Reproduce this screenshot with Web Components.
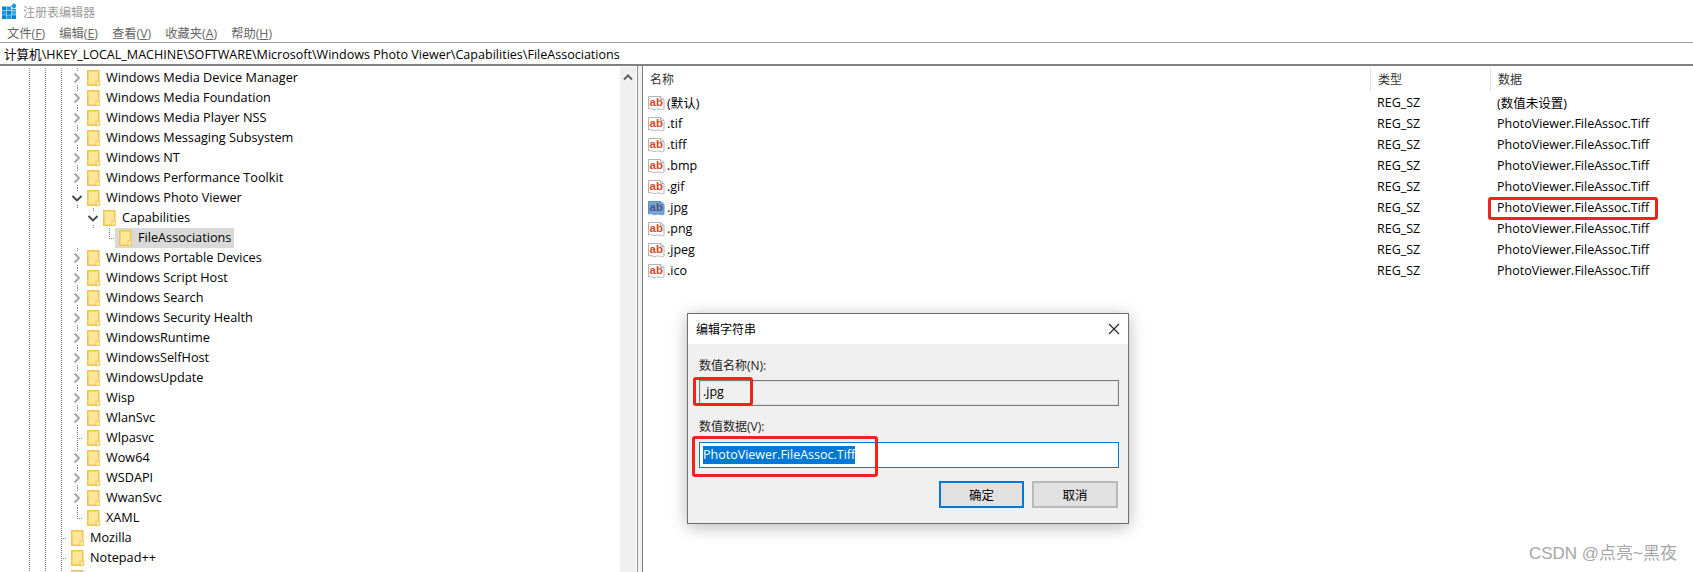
<!DOCTYPE html>
<html lang="zh-CN">
<head>
<meta charset="utf-8">
<title>注册表编辑器</title>
<style>
	html, body { margin: 0; height: 100%; background: #fff; overflow: hidden; }
	body { font: 13px "Open Sans", "Noto Sans CJK SC", sans-serif; color: #000; }
</style>
</head>
<body>
<reg-app></reg-app>
<script>
const FONT = `"Open Sans", "Noto Sans CJK SC", sans-serif`;

class RegTitlebar extends HTMLElement {
	connectedCallback() {
		const s = this.attachShadow({ mode: "open" });
		s.innerHTML = `
			<style>
				:host{display:flex;align-items:center;height:24px;padding-left:2px;gap:7px;font:12px ${FONT};color:#9b9b9b}
				svg{display:block;width:14px;height:16px;margin-bottom:2px}
				span{margin-bottom:1px}
			</style>
			<svg viewBox="0 0 14 16">
				<g fill="#0c7fc9">
					<rect x="0" y="3.500" width="4.400" height="4"/><rect x="4.800" y="3.500" width="4.400" height="4" fill="#1f97dc"/><rect x="9.600" y="6" width="4.400" height="1.500" fill="#1f97dc"/>
					<rect x="0" y="8" width="4.400" height="3.800" fill="#1f97dc"/><rect x="4.800" y="8" width="4.400" height="3.800"/><rect x="9.600" y="8" width="4.400" height="3.800" fill="#38aee6"/>
					<rect x="0" y="12.200" width="4.400" height="3.800"/><rect x="4.800" y="12.200" width="4.400" height="3.800" fill="#1f97dc"/><rect x="9.600" y="12.200" width="4.400" height="3.800"/>
				</g>
				<path d="M12 0l3 3-3 3-3-3z" fill="#1f97dc"/>
			</svg>
			<span>注册表编辑器</span>`;
	}
}
customElements.define("reg-titlebar", RegTitlebar);

class RegMenubar extends HTMLElement {
	connectedCallback() {
		const s = this.attachShadow({ mode: "open" });
		const items = [["文件", "F"], ["编辑", "E"], ["查看", "V"], ["收藏夹", "A"], ["帮助", "H"]];
		s.innerHTML = `
			<style>
				:host{display:flex;align-items:center;height:18px;padding-left:7px;gap:14px;font:12.300px ${FONT};color:#666}
			</style>
			${items.map(([t, k]) => `<span>${t}(<u>${k}</u>)</span>`).join("")}`;
	}
}
customElements.define("reg-menubar", RegMenubar);

class RegAddress extends HTMLElement {
	connectedCallback() {
		const s = this.attachShadow({ mode: "open" });
		s.innerHTML = `
			<style>
				:host{display:flex;align-items:center;height:21px;padding-left:4px;border-top:1px solid #a0a0a0;border-bottom:2px solid #808080;font:12.550px ${FONT};color:#000;white-space:nowrap}
			</style>
			<slot></slot>`;
	}
}
customElements.define("reg-address", RegAddress);

class TreeRow extends HTMLElement {
	connectedCallback() {
		const depth = +this.getAttribute("depth");
		const kind = this.getAttribute("kind") || "c";
		const folderX = 39 + 16 * depth;
		const own = folderX - 10;
		const dots = "repeating-linear-gradient(#7c7c7c 0 1px,transparent 1px 2px)";
		const bg = [];
		// the columns right of x=61 are not drawn under an expanded branch
		for (let x = 29; x < own && x <= 61; x += 16) bg.push(`${dots} ${x}px 0/1px 100% no-repeat`);
		if (kind === "c" || kind === "e") {
			bg.push(`${dots} ${own}px 0/1px 3px no-repeat`);
			bg.push(`${dots} ${own}px 100%/1px 3px no-repeat`);
		} else {
			bg.push(`${dots} ${own}px 0/1px ${kind === "l" ? "10px" : "100%"} no-repeat`);
			bg.push(`repeating-linear-gradient(90deg,#7c7c7c 0 1px,transparent 1px 2px) ${own}px 10px/6px 1px no-repeat`);
		}
		let chev = "";
		if (kind === "c") chev = `<svg viewBox="0 0 12 12"><path d="M3.500 1.500L8 6l-4.500 4.500" fill="none" stroke="#a8a8a8" stroke-width="2"/></svg>`;
		if (kind === "e") chev = `<svg viewBox="0 0 12 12"><path d="M1.500 4L6 8.500 10.500 4" fill="none" stroke="#444" stroke-width="1.800"/></svg>`;
		const s = this.attachShadow({ mode: "open" });
		s.innerHTML = `
			<style>
				:host{display:flex;align-items:center;height:20px;padding-left:${folderX - 16}px;white-space:nowrap;font:12.700px ${FONT};color:#000;background:${bg.join(",")}}
				.chev{flex:none;width:12px;height:12px}
				.chev svg{display:block;width:12px;height:12px}
				.item{display:flex;align-items:center;height:20px;padding:0 3px 0 4px;gap:6px}
				.item.sel{background:#d9d9d9}
				.folder{display:block;flex:none;width:13px;height:16px}
				span{margin-top:-2px}
			</style>
			<div class="chev">${chev}</div>
			<div class="item ${this.hasAttribute("selected") ? "sel" : ""}">
				<svg class="folder" viewBox="0 0 13 16">
					<path d="M.75.75h11v14.500H.75z" fill="#ffe596" stroke="#ebc650" stroke-width="1.500"/>
					<path d="M9 15.500v-4.500h3.500v4.500z" fill="#ffeeb0" stroke="#ebc650"/>
				</svg>
				<span><slot></slot></span>
			</div>`;
	}
}
customElements.define("tree-row", TreeRow);

class RegTree extends HTMLElement {
	connectedCallback() {
		const s = this.attachShadow({ mode: "open" });
		const rows = [
			["Windows Media Device Manager", 3], ["Windows Media Foundation", 3], ["Windows Media Player NSS", 3],
			["Windows Messaging Subsystem", 3], ["Windows NT", 3], ["Windows Performance Toolkit", 3],
			["Windows Photo Viewer", 3, "e"], ["Capabilities", 4, "e"], ["FileAssociations", 5, "l", true],
			["Windows Portable Devices", 3], ["Windows Script Host", 3], ["Windows Search", 3],
			["Windows Security Health", 3], ["WindowsRuntime", 3], ["WindowsSelfHost", 3], ["WindowsUpdate", 3],
			["Wisp", 3], ["WlanSvc", 3], ["Wlpasvc", 3, "t"], ["Wow64", 3], ["WSDAPI", 3], ["WwanSvc", 3],
			["XAML", 3, "l"], ["Mozilla", 2, "t"], ["Notepad++", 2, "t"], ["", 2, "t"],
		];
		s.innerHTML = `
			<style>
				:host{display:flex;min-width:0;overflow:hidden}
				.rows{flex:1;min-width:0;padding-top:2px;overflow:hidden}
				.bar{flex:none;width:16px;margin:1px 1px 0 0;background:#f0f0f0;display:flex;justify-content:center;padding-top:6px;box-sizing:border-box}
				.bar svg{width:10px;height:8px}
			</style>
			<div class="rows">
				${rows.map(([t, d, k, sel]) => `<tree-row depth="${d}" kind="${k || "c"}" ${sel ? "selected" : ""}>${t}</tree-row>`).join("")}
			</div>
			<div class="bar"><svg viewBox="0 0 10 8"><path d="M1 6.500L5 2.500 9 6.500" fill="none" stroke="#606060" stroke-width="2"/></svg></div>`;
	}
}
customElements.define("reg-tree", RegTree);

class RegSplitter extends HTMLElement {
	connectedCallback() {
		this.attachShadow({ mode: "open" }).innerHTML = `
			<style>:host{display:block;box-sizing:border-box;width:6px;background:#f2f2f2;border-left:1px solid #8e8e9c;border-right:1px solid #727a8c}</style>`;
	}
}
customElements.define("reg-splitter", RegSplitter);

class ListRow extends HTMLElement {
	connectedCallback() {
		const active = this.hasAttribute("active");
		const paper = active ? "#72a7dc" : "#fff";
		const edge = active ? "#5f90c4" : "#b4b4b4";
		const ink = active ? "#55507e" : "#d9482a";
		const s = this.attachShadow({ mode: "open" });
		s.innerHTML = `
			<style>
				:host{display:grid;grid-template-columns:727px 120px 1fr;height:21px;align-items:center;font:12.500px ${FONT};color:#000;white-space:nowrap}
				.name{display:flex;align-items:center;padding-left:5px;gap:2px}
				.type,.data{padding-left:7px;margin-top:-1px}
				.name span{margin-top:-1px}
				svg{display:block;flex:none;width:17px;height:16px}
				text{font:bold 11.500px "Liberation Sans",sans-serif}
			</style>
			<div class="name">
				<svg viewBox="0 0 17 16">
					<path d="M.5 1.500h12l3.500 3v9.500c-2 1.500-3 .5-5 0s-3 1-5 .5-3-1.500-5.500-.5z" fill="${paper}" stroke="${edge}"/>
					<path d="M12.500 1.500v3h3.500" fill="none" stroke="${edge}"/>
					<text x="1.500" y="11" fill="${ink}">ab</text>
				</svg>
				<span>${this.getAttribute("name")}</span>
			</div>
			<div class="type">REG_SZ</div>
			<div class="data">${this.getAttribute("data") || "PhotoViewer.FileAssoc.Tiff"}</div>`;
	}
}
customElements.define("list-row", ListRow);

class RegList extends HTMLElement {
	connectedCallback() {
		const s = this.attachShadow({ mode: "open" });
		s.innerHTML = `
			<style>
				:host{display:block;min-width:0;overflow:hidden}
				.head{display:grid;grid-template-columns:727px 120px 1fr;height:26px;font:12px ${FONT};color:#333;align-items:center}
				.head div{height:24px;display:flex;align-items:center;padding-left:7px;border-left:1px solid #e5e5e5;box-sizing:border-box}
				.head div:first-child{border-left:0}
			</style>
			<div class="head"><div>名称</div><div>类型</div><div>数据</div></div>
			<slot></slot>`;
	}
}
customElements.define("reg-list", RegList);

class RedMark extends HTMLElement {
	connectedCallback() {
		const a = (n) => this.getAttribute(n) + "px";
		this.attachShadow({ mode: "open" }).innerHTML = `
			<style>
				:host{position:absolute;box-sizing:border-box;left:${a("x")};top:${a("y")};width:${a("w")};height:${a("h")};border:3px solid #f5211b;border-radius:3px;pointer-events:none}
			</style>`;
	}
}
customElements.define("red-mark", RedMark);

class RegDialog extends HTMLElement {
	connectedCallback() {
		const s = this.attachShadow({ mode: "open" });
		s.innerHTML = `
			<style>
				:host{position:absolute;left:687px;top:313px;width:442px;height:211px;box-sizing:border-box;border:1px solid #6e6e6e;background:#f0f0f0;box-shadow:0 3px 16px rgba(0,0,0,.28);font:12px ${FONT};color:#000}
				.title{display:flex;align-items:center;justify-content:space-between;height:30px;background:#fff;padding:0 8px 0 8px}
				.title svg{display:block;width:12px;height:12px}
				.body{padding:12px 9px 0 11px;font-size:12px}
				.label{height:20px;line-height:20px;color:#222}
				.field{box-sizing:border-box;height:26px;margin-top:4px;border:1px solid #7a7a7a;background:#f0f0f0;display:flex;align-items:center;padding-left:3px;font-size:12.500px;box-shadow:inset 0 0 0 1px #e2e2e2}
				.field b{font-weight:400;margin-top:-3px}
				.field.focus{margin-top:5px;border-color:#0078d7;background:#fff;box-shadow:none}
				.field.focus span{background:#0078d7;color:#fff;line-height:18px}
				.second{margin-top:11px}
				.btns{display:flex;justify-content:flex-end;gap:8px;margin-top:13px;padding-right:1px}
				.btn{box-sizing:border-box;width:85px;height:27px;background:#e1e1e1;border:2px solid #b8b8b8;display:flex;align-items:center;justify-content:center;font-size:12.500px}
				.btn.def{border-color:#0078d7}
				.btn.wide{width:86px}
			</style>
			<div class="title">
				<span>编辑字符串</span>
				<svg viewBox="0 0 12 12"><path d="M1 1l10 10M11 1L1 11" stroke="#222" stroke-width="1.100" fill="none"/></svg>
			</div>
			<div class="body">
				<div class="label">数值名称(N):</div>
				<div class="field"><b>.jpg</b></div>
				<div class="label second">数值数据(V):</div>
				<div class="field focus"><span>PhotoViewer.FileAssoc.Tiff</span></div>
				<div class="btns"><div class="btn def">确定</div><div class="btn wide">取消</div></div>
			</div>`;
	}
}
customElements.define("reg-dialog", RegDialog);

class RegApp extends HTMLElement {
	connectedCallback() {
		const s = this.attachShadow({ mode: "open" });
		const names = ["(默认)", ".tif", ".tiff", ".bmp", ".gif", ".jpg", ".png", ".jpeg", ".ico"];
		s.innerHTML = `
			<style>
				:host{display:flex;flex-direction:column;position:relative;width:1693px;height:572px;overflow:hidden;background:#fff}
				.panes{flex:1;min-height:0;display:grid;grid-template-columns:637px 6px 1fr}
				.mark{position:absolute;right:16px;bottom:8px;font:17px "Liberation Sans","Noto Sans CJK SC",sans-serif;color:#a6a6a6;white-space:nowrap}
			</style>
			<reg-titlebar></reg-titlebar>
			<reg-menubar></reg-menubar>
			<reg-address>计算机\\HKEY_LOCAL_MACHINE\\SOFTWARE\\Microsoft\\Windows Photo Viewer\\Capabilities\\FileAssociations</reg-address>
			<div class="panes">
				<reg-tree></reg-tree>
				<reg-splitter></reg-splitter>
				<reg-list>
					${names.map((n, i) => `<list-row name="${n}" ${i === 0 ? 'data="(数值未设置)"' : ""} ${n === ".jpg" ? "active" : ""}></list-row>`).join("")}
				</reg-list>
			</div>
			<reg-dialog></reg-dialog>
			<red-mark x="1488" y="197" w="170" h="23"></red-mark>
			<red-mark x="693" y="377" w="60" h="29"></red-mark>
			<red-mark x="692" y="436" w="186" h="41"></red-mark>
			<div class="mark">CSDN @点亮~黑夜</div>`;
	}
}
customElements.define("reg-app", RegApp);
</script>
</body>
</html>
